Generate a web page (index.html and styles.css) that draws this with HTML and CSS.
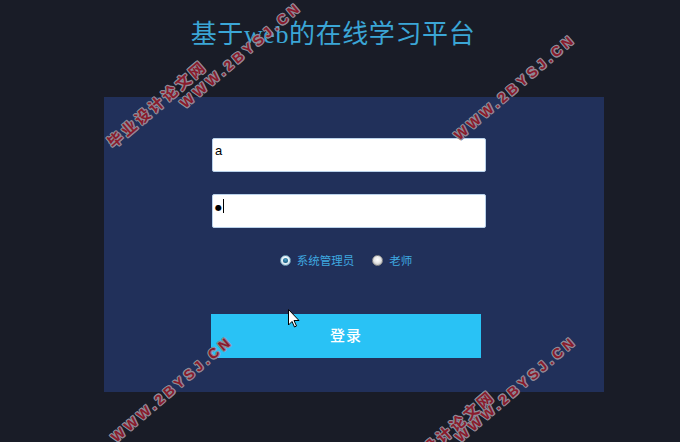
FILE: index.html
```html
<!DOCTYPE html>
<html lang="zh-CN">
<head>
<meta charset="utf-8">
<title>基于web的在线学习平台</title>
<link rel="stylesheet" href="styles.css">
</head>
<body>
<div class="page">
  <header class="head">
    <h1 class="title">基于web的在线学习平台</h1>
  </header>
  <main class="panel">
    <form class="form">
      <div class="field"><span class="val">a</span></div>
      <div class="field"><span class="dot">●</span><span class="caret"></span></div>
      <div class="roles">
        <label class="role"><span class="radio on"></span>系统管理员</label>
        <label class="role"><span class="radio"></span>老师</label>
      </div>
      <button type="button" class="btn">登录</button>
    </form>
  </main>

  <div class="wm wm-url" style="left:182px;top:97px">WWW.2BYSJ.CN</div>
  <div class="wm wm-cn" style="left:110px;top:137px">毕业设计论文网</div>
  <div class="wm wm-url" style="left:456px;top:129px">WWW.2BYSJ.CN</div>
  <div class="wm wm-url" style="left:113px;top:431px">WWW.2BYSJ.CN</div>
  <div class="wm wm-url" style="left:457px;top:431px">WWW.2BYSJ.CN</div>
  <div class="wm wm-cn" style="left:398px;top:467px">毕业设计论文网</div>

  <svg class="cursor" width="12" height="19" viewBox="0 0 12 19">
    <path d="M0.5 0.5 L0.5 16 L4 12.5 L6.5 18 L8.5 17 L6 11.5 L11 11.5 Z" fill="#fff" stroke="#000" stroke-width="1"/>
  </svg>
</div>
</body>
</html>
```
FILE: styles.css
```css
html, body {
  margin: 0;
  padding: 0;
}
body {
  background: #191c27;
  width: 680px;
  height: 442px;
  overflow: hidden;
}
.page {
  position: relative;
  width: 680px;
  height: 442px;
  overflow: hidden;
}
.head {
  height: 97px;
  display: flex;
  justify-content: center;
  padding-right: 14px;
}
.title {
  margin: 18px 0 0;
  font-family: "Liberation Serif", "Noto Sans CJK SC", serif;
  font-weight: normal;
  font-size: 26px;
  line-height: 34px;
  color: #3ba6d6;
  letter-spacing: 0.6px;
}
.panel {
  margin-left: 104px;
  width: 500px;
  height: 295px;
  background: #21305a;
}
.form {
  display: flex;
  flex-direction: column;
  padding: 41px 0 0 107px;
}
.field {
  box-sizing: border-box;
  width: 274px;
  height: 34px;
  margin-left: 1px;
  background: #fff;
  border: 1px solid #b9d1ea;
  border-radius: 2px;
  display: flex;
  align-items: flex-start;
  padding: 4px 2px 0;
  font-family: "Liberation Sans", Arial, sans-serif;
  font-size: 13px;
  line-height: 15px;
  color: #000;
}
.field + .field {
  margin-top: 22px;
}
.dot {
  font-family: "DejaVu Sans", sans-serif;
  font-size: 8px;
  line-height: 15px;
  margin-top: 1px;
}
.caret {
  width: 1px;
  height: 14px;
  background: #000;
  margin: 0 0 0 1px;
}
.roles {
  display: flex;
  justify-content: center;
  gap: 18px;
  margin-top: 25px;
  margin-left: -2px;
  width: 274px;
  height: 14px;
}
.role {
  display: flex;
  align-items: center;
  gap: 6px;
  font-family: "Noto Sans CJK SC", sans-serif;
  font-size: 11.5px;
  line-height: 14px;
  color: #3fa9e0;
}
.radio {
  box-sizing: border-box;
  width: 11px;
  height: 11px;
  border-radius: 50%;
  background: radial-gradient(circle at 50% 40%, #ffffff 0%, #e8e8e8 45%, #a9a9a9 100%);
  border: 1px solid #8e8e8e;
  display: flex;
  align-items: center;
  justify-content: center;
}
.radio.on {
  background: radial-gradient(circle at 50% 40%, #ffffff 0%, #dcecf4 60%, #9fc3d6 100%);
  border-color: #6e9ab4;
}
.radio.on::after {
  content: "";
  width: 5px;
  height: 5px;
  border-radius: 50%;
  background: radial-gradient(circle at 50% 35%, #4fa3c9 0%, #1a5f85 70%, #0e3d5a 100%);
}
.btn {
  margin-top: 47px;
  width: 270px;
  height: 44px;
  border: 0;
  padding: 0 0 3px;
  background: #29c2f5;
  color: #fff;
  font-family: "Noto Sans CJK SC", sans-serif;
  font-size: 15px;
  font-weight: 500;
  letter-spacing: 1px;
  cursor: pointer;
}
.wm {
  position: absolute;
  transform-origin: 0 50%;
  transform: rotate(-40.5deg);
  white-space: nowrap;
  font-family: "Liberation Sans", "Noto Sans CJK SC", sans-serif;
  font-weight: bold;
  color: #8a1b2c;
  line-height: 16px;
  text-shadow: 1px 0 0 #8f8a98, -1px 0 0 #8f8a98, 0 1px 0 #8f8a98, 0 -1px 0 #8f8a98, 1px 1px 0 #8f8a98, -1px -1px 0 #8f8a98, 1px -1px 0 #8f8a98, -1px 1px 0 #8f8a98;
  pointer-events: none;
}
.wm-url {
  font-size: 14px;
  letter-spacing: 3.6px;
}
.wm-cn {
  font-size: 15px;
  letter-spacing: 2.8px;
}
.cursor {
  position: absolute;
  left: 288px;
  top: 309px;
}
```
